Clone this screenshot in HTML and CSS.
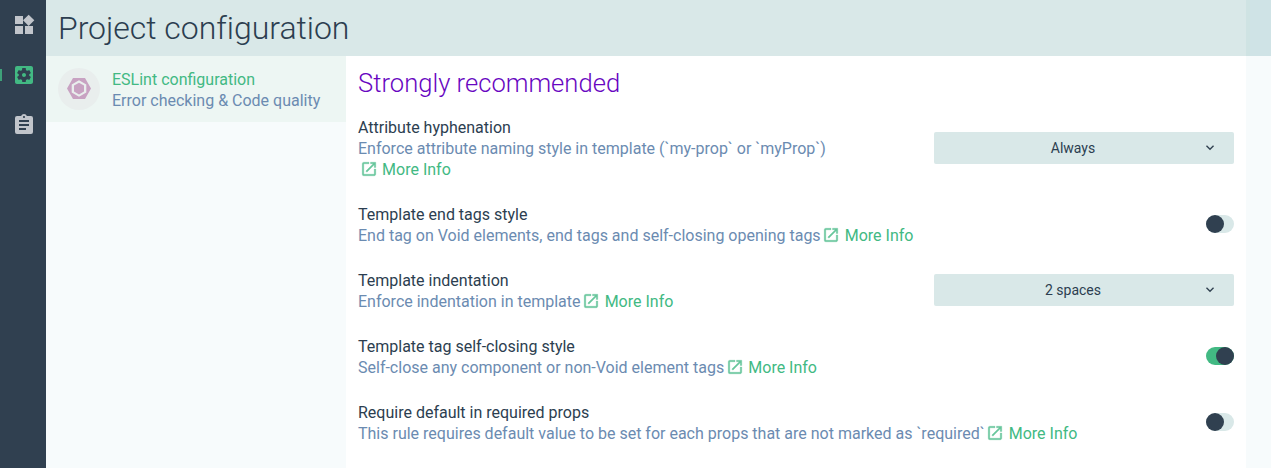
FILE: index.html
```html
<!DOCTYPE html>
<html lang="en">
<head>
<meta charset="utf-8">
<title>Project configuration</title>
<link rel="stylesheet" href="styles.css">
</head>
<body>
<svg class="defs" width="0" height="0">
  <symbol id="open" viewBox="0 0 24 24"><path d="M19 19H5V5h7V3H5a2 2 0 0 0-2 2v14a2 2 0 0 0 2 2h14c1.1 0 2-.9 2-2v-7h-2v7zM14 3v2h3.59l-9.83 9.83 1.41 1.41L19 6.410V10h2V3h-7z"/></symbol>
  <symbol id="chevron" viewBox="0 0 24 24"><path d="M7.410 7.840 12 12.420l4.590-4.580L18 9.250l-6 6-6-6z"/></symbol>
</svg>
<div class="app">
  <nav class="side">
    <a class="side-item"><svg viewBox="0 0 24 24"><path d="M13 13v8h8v-8h-8zM3 21h8v-8H3v8zM3 3v8h8V3H3zm13.660-1.310L11 7.340 16.660 13l5.660-5.660-5.660-5.650z"/></svg></a>
    <a class="side-item active"><svg viewBox="0 0 24 24"><path d="M12 10c-1.100 0-2 .9-2 2s.9 2 2 2 2-.9 2-2-.9-2-2-2zm7-7H5a2 2 0 0 0-2 2v14c0 1.100.890 2 2 2h14c1.110 0 2-.9 2-2V5c0-1.110-.890-2-2-2zm-1.750 9c0 .230-.020.460-.050.680l1.480 1.160c.130.110.170.3.080.450l-1.400 2.420c-.090.150-.270.210-.430.150l-1.740-.7c-.360.280-.760.510-1.180.690l-.260 1.850c-.030.170-.180.3-.350.300h-2.800c-.170 0-.320-.130-.350-.290l-.260-1.850c-.430-.180-.820-.410-1.180-.690l-1.740.7c-.160.060-.340 0-.430-.150l-1.400-2.420a.35.35 0 0 1 .080-.450l1.480-1.160c-.030-.230-.050-.460-.050-.690s.020-.460.050-.680l-1.480-1.160a.35.35 0 0 1-.080-.450l1.400-2.420c.090-.150.270-.210.430-.150l1.740.7c.360-.280.760-.510 1.180-.690l.260-1.850c.030-.170.180-.3.350-.300h2.800c.170 0 .320.130.350.290l.260 1.850c.430.180.820.410 1.180.690l1.740-.7c.160-.060.340 0 .430.150l1.400 2.420c.090.150.050.340-.080.450l-1.480 1.160c.030.230.050.460.050.690z"/></svg></a>
    <a class="side-item"><svg viewBox="0 0 24 24"><path d="M19 3h-4.180C14.400 1.840 13.300 1 12 1s-2.400.840-2.820 2H5a2 2 0 0 0-2 2v14a2 2 0 0 0 2 2h14a2 2 0 0 0 2-2V5a2 2 0 0 0-2-2zm-7 0c.550 0 1 .450 1 1s-.450 1-1 1-1-.450-1-1 .450-1 1-1zm2 14H7v-2h7v2zm3-4H7v-2h10v2zm0-4H7V7h10v2z"/></svg></a>
  </nav>
  <div class="page">
    <header class="header"><h1>Project configuration</h1><div class="header-end"></div></header>
    <div class="columns">
      <aside class="list">
        <div class="list-item">
          <div class="logo"><svg viewBox="0 0 24 21"><path fill-rule="evenodd" d="M6 0h12l6 10.500L18 21H6L0 10.500zM12 2.300 4.700 6.500v8.100L12 18.800l7.300-4.200V6.500z"/><path d="m12 4.700 5 2.900v5.900l-5 2.900-5-2.900V7.600z"/></svg></div>
          <div class="item-text"><div class="item-name">ESLint configuration</div><div class="desc">Error checking &amp; Code quality</div></div>
        </div>
      </aside>
      <main class="content">
        <h2>Strongly recommended</h2>
        <section class="row">
          <div><div class="name">Attribute hyphenation</div><div class="desc">Enforce attribute naming style in template (`my-prop` or `myProp`)<br><a class="link"><svg><use href="#open"/></svg>More Info</a></div></div>
          <button class="select"><span>Always</span><svg><use href="#chevron"/></svg></button>
        </section>
        <section class="row">
          <div><div class="name">Template end tags style</div><div class="desc">End tag on Void elements, end tags and self-closing opening tags<a class="link"><svg><use href="#open"/></svg>More Info</a></div></div>
          <div class="switch"></div>
        </section>
        <section class="row">
          <div><div class="name">Template indentation</div><div class="desc">Enforce indentation in template<a class="link"><svg><use href="#open"/></svg>More Info</a></div></div>
          <button class="select"><span>2 spaces</span><svg><use href="#chevron"/></svg></button>
        </section>
        <section class="row">
          <div><div class="name">Template tag self-closing style</div><div class="desc">Self-close any component or non-Void element tags<a class="link"><svg><use href="#open"/></svg>More Info</a></div></div>
          <div class="switch on"></div>
        </section>
        <section class="row">
          <div><div class="name">Require default in required props</div><div class="desc">This rule requires default value to be set for each props that are not marked as `required`<a class="link"><svg><use href="#open"/></svg>More Info</a></div></div>
          <div class="switch"></div>
        </section>
      </main>
      <div class="gutter"></div>
    </div>
  </div>
</div>
</body>
</html>
```
FILE: styles.css
```css
* { box-sizing: border-box; }
body { margin: 0; font: 16px/21px Roboto, sans-serif; color: #2c3e50; overflow: hidden; }
h1, h2 { margin: 0; font-weight: 300; }
.defs { display: none; }
.app { display: flex; height: 468px; }
.side { width: 46px; background: #304050; flex: none; }
.side-item { display: flex; align-items: center; height: 50px; padding-left: 12px; }
.side-item svg { width: 24px; height: 24px; fill: #c1c5cb; }
.side-item.active svg { fill: #42b983; }
.side-item.active { padding-left: 0; gap: 10px; }
.side-item.active::before { content: ""; width: 2px; height: 12px; background: #42b983; opacity: .8; }
.page { flex: 1; min-width: 0; display: flex; flex-direction: column; }
.header { display: flex; height: 56px; background: #d9e8e8; }
.header h1 { flex: 1; padding-left: 12px; font-size: 32px; line-height: 56px; letter-spacing: -.03px; font-variant-ligatures: normal; }
.header-end { width: 25px; background: linear-gradient(to right, #cfe3e3 4px, #cfe3e6 4px); }
.columns { display: flex; flex: 1; min-height: 0; }
.list { width: 300px; background: #f7fbfc; }
.list-item { display: flex; align-items: center; gap: 12px; height: 66px; padding: 0 12px; background: #edf6f3; }
.logo { display: flex; align-items: center; justify-content: center; width: 42px; height: 42px; border-radius: 50%; background: #e9eeed; }
.logo svg { width: 24px; height: 21px; margin-bottom: 1px; fill: #c8a2c2; }
.item-text { padding-top: 2px; }
.item-name { color: #42b983; }
.content { flex: 1; padding: 0 12px; background: #fff; }
.content h2 { height: 49px; padding-top: 7px; font-size: 25.6px; line-height: 40px; color: #6806c1; }
.row { display: flex; justify-content: space-between; align-items: center; padding: 12px 0; }
.desc { color: #6b8bb1; white-space: nowrap; }
.link { display: inline-flex; align-items: center; gap: 4.3px; height: 21px; margin-left: 1.8px; color: #42b983; vertical-align: top; }
.link svg { width: 18px; height: 18px; margin-bottom: 2px; fill: #42b983; stroke: #42b983; stroke-width: .4; opacity: .8; }
.select { display: flex; align-items: center; width: 300px; height: 32px; margin-bottom: 2px; padding: 0 16px; border: 0; border-radius: 2px; background: #d9e8e8; color: #2c3e50; font: 14px/20px Roboto, sans-serif; }
.select span { flex: 1; text-align: center; padding-right: 6px; }
.select svg { width: 16px; height: 16px; fill: #304050; }
.switch { display: flex; width: 28px; height: 18px; margin-bottom: 2px; border-radius: 9px; background: #d9e8e8; }
.switch::before { content: ""; width: 18px; height: 18px; border-radius: 50%; background: #304050; }
.switch.on { justify-content: flex-end; background: #42b983; }
.gutter { width: 25px; background: #f7fbfc; }
```
